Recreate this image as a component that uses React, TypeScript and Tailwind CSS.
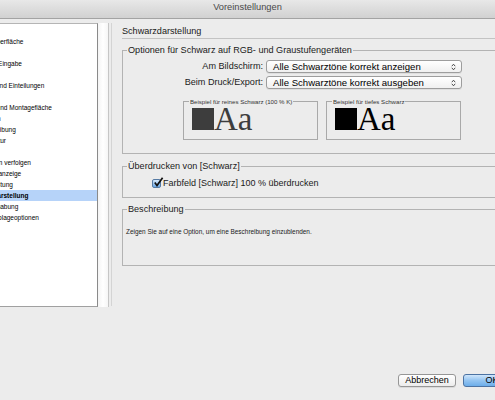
import React from "react";

const items = [
  "Allgemein",
  "Benutzeroberfläche",
  "Eingabe",
  "Erweiterte Eingabe",
  "Satz",
  "Einheiten und Einteilungen",
  "Raster",
  "Hilfslinien und Montagefläche",
  "Wörterbuch",
  "Rechtschreibung",
  "Autokorrektur",
  "Notizen",
  "Änderungen verfolgen",
  "Textmodusanzeige",
  "Anzeigeleistung",
  "Schwarzdarstellung",
  "Dateihandhabung",
  "Zwischenablageoptionen",
];

function Arrows() {
  return (
    <svg width="5" height="8" viewBox="0 0 5 8">
      <path d="M0.8 3.2 L2.5 1.2 L4.2 3.2" fill="none" stroke="#3a3a3a" strokeWidth="0.9" />
      <path d="M0.8 4.8 L2.5 6.8 L4.2 4.8" fill="none" stroke="#3a3a3a" strokeWidth="0.9" />
    </svg>
  );
}

function Select({ text }: { text: string }) {
  return (
    <div className="flex h-[13px] w-[196px] items-center justify-between rounded-[3px] border border-[#9d9d9d] bg-gradient-to-b from-white to-[#f0f0f0] pl-[6px] pr-[5px] shadow-[0_1px_0_rgba(0,0,0,0.06)]">
      <span className="whitespace-nowrap text-[9.6px] leading-[11px] text-black">{text}</span>
      <Arrows />
    </div>
  );
}

function Sample({ label, color }: { label: string; color: "gray" | "black" }) {
  return (
    <fieldset className="w-[135px] border border-[#a9a9a9] pb-[7px]">
      <legend className="ml-[5px] px-[1px] whitespace-nowrap text-[6.1px] leading-[7px] text-[#333]">{label}</legend>
      <div className="mt-[1px] flex items-baseline pl-[8px]">
        <div className={color === "gray" ? "h-[22px] w-[22px] bg-[#3d3d3d]" : "h-[22px] w-[22px] bg-black"} />
        <span
          className={
            color === "gray"
              ? "font-['Liberation_Serif',serif] text-[33px] leading-[26px] text-[#3d3d3d]"
              : "font-['Liberation_Serif',serif] text-[33px] leading-[26px] text-black"
          }
        >
          Aa
        </span>
      </div>
    </fieldset>
  );
}

export default function App() {
  return (
    <div className="flex h-[400px] w-[495px] flex-col overflow-hidden bg-[#ececec] font-['Liberation_Sans',Arial,sans-serif] text-[#1a1a1a]">
      {/* Title bar */}
      <div className="flex h-[19px] shrink-0 justify-center border-b border-[#a3a3a3] bg-gradient-to-b from-[#e8e8e8] to-[#d1d1d1] pt-[1px]">
        <span className="text-[9.3px] leading-[12px] text-[#4a4a4a]">Voreinstellungen</span>
      </div>

      {/* Body */}
      <div className="flex h-[288px] shrink-0 pt-[4px]">
        {/* List */}
        <div className="h-[284px] w-[98px] shrink-0 overflow-hidden border-t border-r border-b border-t-[#b5b5b5] border-r-[#8a8a8a] border-b-[#a0a0a0] bg-white">
          <ul className="-ml-[33px] pt-[0.5px]">
            {items.map((it) => (
              <li
                key={it}
                className={
                  it === "Schwarzdarstellung"
                    ? "h-[11px] whitespace-nowrap bg-[#b6d3f9] text-[6.5px] font-bold leading-[11px] text-black"
                    : "h-[11px] whitespace-nowrap text-[6.5px] leading-[11px] text-black"
                }
              >
                {it}
              </li>
            ))}
          </ul>
        </div>
        {/* Scrollbar track */}
        <div className="h-[284px] w-[11px] shrink-0 border-r border-[#c6c6c6] bg-gradient-to-r from-[#f4f4f4] via-white to-[#f6f6f6]" />

        {/* Right pane */}
        <div className="ml-[2px] h-[283px] w-[420px] shrink-0 border-l border-[#d4d4d4] pl-[10px]">
          <div className="border-b border-[#c3c3c3] pt-[2px] pb-[1px] text-[9.1px] leading-[12px]">Schwarzdarstellung</div>

          {/* Group 1 */}
          <fieldset className="mt-[5px] border border-[#b3b3b3] pb-[13px]">
            <legend className="ml-[4px] px-[1px] whitespace-nowrap text-[9.1px] leading-[12px]">
              Optionen für Schwarz auf RGB- und Graustufengeräten
            </legend>
            <div className="mt-[4px] flex flex-col gap-[3px]">
              <div className="flex items-center gap-[3px]">
                <span className="w-[140px] text-right text-[9.1px] leading-[11px]">Am Bildschirm:</span>
                <Select text="Alle Schwarztöne korrekt anzeigen" />
              </div>
              <div className="flex items-center gap-[3px]">
                <span className="w-[140px] text-right text-[9.1px] leading-[11px]">Beim Druck/Export:</span>
                <Select text="Alle Schwarztöne korrekt ausgeben" />
              </div>
            </div>
            <div className="mt-[9px] flex gap-[8px] pl-[60px]">
              <Sample label="Beispiel für reines Schwarz (100 % K)" color="gray" />
              <Sample label="Beispiel für tiefes Schwarz" color="black" />
            </div>
          </fieldset>

          {/* Group 2 */}
          <fieldset className="mt-[6px] border border-[#b3b3b3] pb-[9px]">
            <legend className="ml-[4px] px-[1px] whitespace-nowrap text-[9.1px] leading-[12px]">Überdrucken von [Schwarz]</legend>
            <div className="mt-[6px] flex h-[10px] items-center gap-[2px] pl-[29px]">
              <div className="relative h-[9px] w-[9px] rounded-[2px] border border-[#557aa3] bg-gradient-to-b from-[#d6e9fb] to-[#6ba8e4]">
                <svg className="absolute -top-[3px] left-[0px]" width="11" height="11" viewBox="0 0 11 11">
                  <path d="M1.8 5.6 L4 8.6 L9.6 0.8" stroke="#111" strokeWidth="1.7" fill="none" />
                </svg>
              </div>
              <span className="whitespace-nowrap text-[9px] leading-[11px]">Farbfeld [Schwarz] 100 % überdrucken</span>
            </div>
          </fieldset>

          {/* Group 3 */}
          <fieldset className="mt-[5px] border border-[#b3b3b3]">
            <legend className="ml-[4px] px-[1px] whitespace-nowrap text-[9.1px] leading-[12px]">Beschreibung</legend>
            <div className="h-[50px] pt-[2px] pl-[3px]">
              <span className="whitespace-nowrap text-[6.45px] leading-[8px]">
                Zeigen Sie auf eine Option, um eine Beschreibung einzublenden.
              </span>
            </div>
          </fieldset>
        </div>
      </div>

      {/* Buttons */}
      <div className="mt-[67px] flex gap-[7px] pl-[398px]">
        <div className="flex h-[13px] w-[58px] shrink-0 items-center justify-center rounded-[3px] border border-[#969696] bg-gradient-to-b from-white to-[#ececec] text-[9px] leading-[11px] text-black shadow-[0_1px_0_rgba(0,0,0,0.08)]">
          Abbrechen
        </div>
        <div className="flex h-[13px] w-[58px] shrink-0 items-center justify-center rounded-[3px] border border-[#4c73a3] bg-gradient-to-b from-[#d0e6fb] via-[#93c4f1] to-[#6cade9] text-[9px] leading-[11px] text-black">
          OK
        </div>
      </div>
    </div>
  );
}
